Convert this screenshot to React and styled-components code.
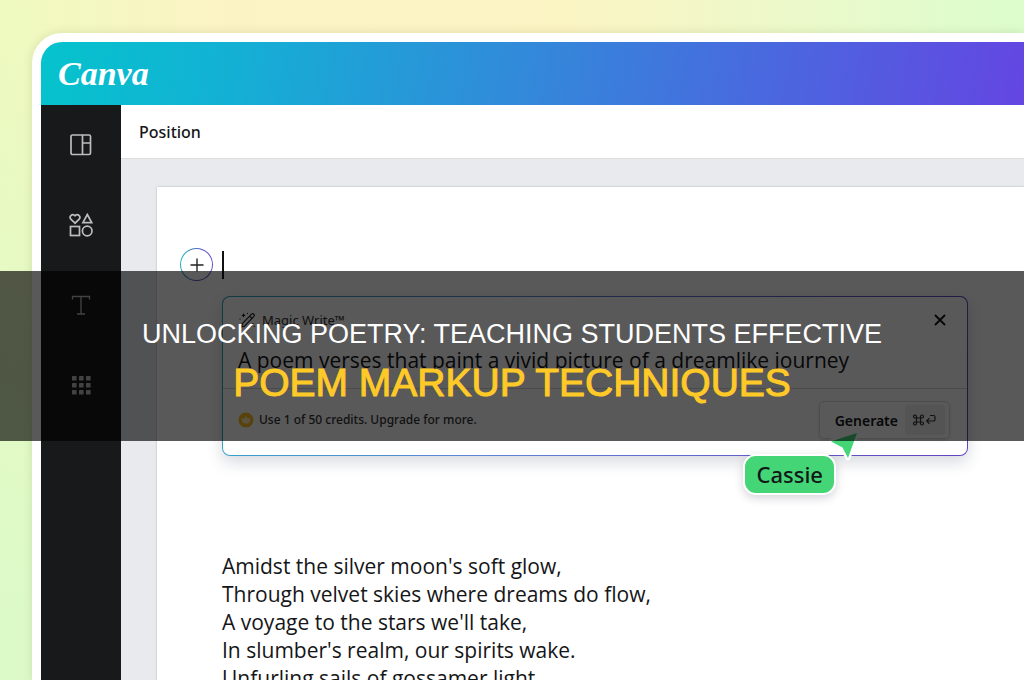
import React from "react";
import styled, { createGlobalStyle } from "styled-components"

const poem = [
    "Amidst the silver moon's soft glow,",
    "Through velvet skies where dreams do flow,",
    "A voyage to the stars we'll take,",
    "In slumber's realm, our spirits wake.",
    "Unfurling sails of gossamer light,",
]

function LayoutIcon() {
    return (
        <Icon viewBox="0 0 24 24">
            <rect x="2" y="2" width="19.500" height="19.500" rx="1.5" />
            <path d="M13.500 2v19.500M13.500 10h8" />
        </Icon>
    )
}

function ElementsIcon() {
    return (
        <Icon viewBox="0 0 24 24">
            <path d="M6 10.2 1.8 6.1C-.3 3.5 3.4-.4 6 2.7c2.6-3.1 6.3.8 4.2 3.4z" />
            <path d="M18.300 1.500 22.700 9.700H13.900z" />
            <rect x="1.500" y="13.500" width="9" height="9" />
            <circle cx="18.200" cy="18" r="4.800" />
        </Icon>
    )
}

function TextIcon() {
    return (
        <Icon viewBox="0 0 24 24" $thin>
            <path d="M3.500 6.500V3.500h17v3M12 3.500v17.500M8 21h8" />
        </Icon>
    )
}

function AppsIcon() {
    const spots = [3, 10, 17]
    return (
        <Icon viewBox="0 0 24 24" $solid>
            {spots.map((y) => spots.map((x) => <rect key={x + "-" + y} x={x} y={y} width="4.600" height="4.600" rx=".6" />))}
        </Icon>
    )
}

function App() {
    return (
        <Screen>
            <GlobalStyle />
            <Editor>
                <Header>
                    <Logo href="#">Canva</Logo>
                </Header>
                <Workspace>
                    <SideBar>
                        <SideButton aria-label="Design"><LayoutIcon /></SideButton>
                        <SideButton aria-label="Elements"><ElementsIcon /></SideButton>
                        <SideButton aria-label="Text"><TextIcon /></SideButton>
                        <SideButton aria-label="Apps"><AppsIcon /></SideButton>
                    </SideBar>
                    <Main>
                        <ToolBar>
                            <ToolButton>Position</ToolButton>
                        </ToolBar>
                        <Canvas>
                            <Paper>
                                <NewLine>
                                    <AddButton aria-label="Add">
                                        <svg width="14" height="14" viewBox="0 0 14 14" fill="none" stroke="#222" strokeWidth="1.4">
                                            <path d="M7 .5v13M.5 7h13" />
                                        </svg>
                                    </AddButton>
                                    <Caret />
                                </NewLine>
                                <MagicCard onSubmit={(e) => e.preventDefault()}>
                                    <CardTop>
                                        <MagicLabel htmlFor="prompt">
                                            <svg width="17" height="17" viewBox="0 0 17 17" fill="none" stroke="#222" strokeWidth="1.2" strokeLinecap="round" strokeLinejoin="round">
                                                <path d="M2.500 15 3.300 11.700 12.600 2.100c1.500-1.500 3.800.8 2.300 2.300L5.600 14.100zM10.600 4.100l2.300 2.300" />
                                                <path d="M4.500 2v2.600M3.200 3.300h2.600M1 7v.1M8.500 1.300v.1M14 11.500v.1M12 14v.1M15.300 14.300v.1" />
                                            </svg>
                                            Magic Write™
                                        </MagicLabel>
                                        <CloseButton type="button" aria-label="Close">
                                            <svg width="12" height="12" viewBox="0 0 12 12" fill="none" stroke="#111" strokeWidth="1.8">
                                                <path d="M1 1l10 10M11 1 1 11" />
                                            </svg>
                                        </CloseButton>
                                    </CardTop>
                                    <Prompt id="prompt" defaultValue="A poem verses that paint a vivid picture of a dreamlike journey" />
                                    <CardBottom>
                                        <Credits>
                                            <svg width="16" height="16" viewBox="0 0 16 16">
                                                <circle cx="8" cy="8" r="7.500" fill="#fdbc22" />
                                                <path d="M3.500 5.500 6 7l2-3 2 3 2.500-1.500-.8 4.500c-1.600 2-5.800 2-7.400 0z" fill="#fff1bd" />
                                            </svg>
                                            Use 1 of 50 credits. Upgrade for more.
                                        </Credits>
                                        <GenerateButton>
                                            Generate
                                            <KeyHint>
                                                <svg width="24" height="12" viewBox="0 0 24 12" fill="none" stroke="#333" strokeWidth="1.2">
                                                    <path d="M3.500 4h4v4h-4zM3.500 4H2.300A1.500 1.500 0 1 1 3.500 2.500zM7.500 4V2.500A1.500 1.500 0 1 1 9 4zM7.500 8H9a1.500 1.500 0 1 1-1.500 1.500zM3.500 8v1.500A1.500 1.500 0 1 1 2 8z" />
                                                    <path d="M17 1.500h3.500a1.500 1.500 0 0 1 1.500 1.500v2.500a1.500 1.500 0 0 1-1.500 1.500H14M16.500 4.200 13.700 7l2.800 2.800" />
                                                </svg>
                                            </KeyHint>
                                        </GenerateButton>
                                    </CardBottom>
                                    <Pointer width="34" height="34" viewBox="0 0 34 34">
                                        <path d="M30 4 4 12.500 15.500 18.500 21 29z" fill="#43d576" stroke="#fff" strokeWidth="5" strokeLinejoin="round" paintOrder="stroke" />
                                    </Pointer>
                                    <NameTag>Cassie</NameTag>
                                </MagicCard>
                                <Poem>
                                    {poem.map((line) => <p key={line}>{line}</p>)}
                                </Poem>
                            </Paper>
                        </Canvas>
                    </Main>
                </Workspace>
            </Editor>
            <TitleBand>
                <h1>UNLOCKING POETRY: TEACHING STUDENTS EFFECTIVE</h1>
                <h2>POEM MARKUP TECHNIQUES</h2>
            </TitleBand>
        </Screen>
    )
}

const GlobalStyle = createGlobalStyle`
    *{
        box-sizing:border-box;
    }
    body{
        margin:0;
        font-family:"Noto Sans", sans-serif;
        color:#151618;
    }
    h1, h2, p{
        margin:0;
        font-weight:400;
    }
    button{
        font-family:inherit;
        color:inherit;
        border:none;
        padding:0;
        background:none;
        cursor:pointer;
    }
    svg{
        display:block;
    }
`
const Screen = styled.div`
    position:relative;
    display:flex;
    height:100vh;
    overflow:hidden;
    padding:33px 0 0 32px;
    background:
        linear-gradient(to bottom, rgba(220,250,200,0), #dcfac8 90%) left / 32px 100% no-repeat,
        linear-gradient(to right, #eefabf, #fcf3c4 22%, #fbf4c3 55%, #e9facb 82%, #dcfdcd);
`
const Editor = styled.div`
    flex:1;
    min-width:0;
    display:flex;
    flex-direction:column;
    border:solid white;
    border-width:9px 0 0 9px;
    border-radius:30px 0 0 0;
    overflow:hidden;
    background-color:white;
    box-shadow:0 0 10px rgba(90,90,40,0.16);
`
const Header = styled.header`
    flex:none;
    height:63px;
    display:flex;
    align-items:center;
    padding-left:17px;
    background:linear-gradient(100deg, #05c3cc, #12b2d4 18%, #3388da 50%, #4c65df 76%, #6446e2);
`
const Logo = styled.a`
    font-family:"Liberation Serif", serif;
    font-size:34px;
    line-height:40px;
    font-weight:700;
    font-style:italic;
    color:white;
    text-decoration:none;
`
const Workspace = styled.div`
    flex:1;
    min-height:0;
    display:flex;
`
const SideBar = styled.nav`
    flex:none;
    width:80px;
    display:flex;
    flex-direction:column;
    background-color:#18191b;
`
const SideButton = styled.button`
    height:80px;
    display:flex;
    align-items:center;
    justify-content:center;
`
const Icon = styled.svg`
    width:24px;
    height:24px;
    fill:${(props) => (props.$solid ? "#bdbdbf" : "none")};
    stroke:${(props) => (props.$solid ? "none" : "#bdbdbf")};
    stroke-width:${(props) => (props.$thin ? "1.3" : "1.7")};
`
const Main = styled.main`
    flex:1;
    min-width:0;
    display:flex;
    flex-direction:column;
`
const ToolBar = styled.div`
    flex:none;
    height:54px;
    display:flex;
    align-items:center;
    padding-left:18px;
    background-color:white;
    border-bottom:1px solid #dcdddd;
`
const ToolButton = styled.button`
    font-size:16px;
    line-height:20px;
    font-weight:500;
`
const Canvas = styled.div`
    flex:1;
    min-height:0;
    overflow:hidden;
    padding:28px 0 0 36px;
    background-color:#e9eaee;
`
const Paper = styled.article`
    min-height:100%;
    padding:61px 56px 40px 23px;
    background-color:white;
    box-shadow:0 0 2px rgba(0,0,0,0.25);
`
const NewLine = styled.div`
    display:flex;
    align-items:center;
    gap:9px;
`
const AddButton = styled.button`
    width:33px;
    height:33px;
    display:flex;
    align-items:center;
    justify-content:center;
    border:1px solid transparent;
    border-radius:50%;
    background:linear-gradient(white, white) padding-box, linear-gradient(100deg, #16bcb6, #5f50c8 60%) border-box;
`
const Caret = styled.span`
    width:2px;
    height:28px;
    background-color:#111;
`
const MagicCard = styled.form`
    position:relative;
    margin:15px 0 0 42px;
    border:1px solid transparent;
    border-radius:8px;
    background:linear-gradient(white, white) padding-box, linear-gradient(110deg, #2fa9c4, #5f83d8 40%, #6442c0) border-box;
    box-shadow:0 6px 16px rgba(50,60,90,0.2);
`
const CardTop = styled.div`
    display:flex;
    align-items:center;
    justify-content:space-between;
    padding:12px 21px 0 16px;
`
const MagicLabel = styled.label`
    display:flex;
    align-items:center;
    gap:6px;
    font-size:13px;
    line-height:22px;
    color:#333;
`
const CloseButton = styled.button`
    width:12px;
    height:12px;
`
const Prompt = styled.input`
    display:block;
    width:100%;
    height:58px;
    padding:0 15px;
    border:none;
    border-bottom:1px solid #d4d5d8;
    outline:none;
    background:none;
    font-family:"Open Sans", sans-serif;
    font-size:21px;
    color:#151618;
`
const CardBottom = styled.div`
    display:flex;
    align-items:center;
    justify-content:space-between;
    padding:12px 17px 16px 15px;
`
const Credits = styled.div`
    display:flex;
    align-items:center;
    gap:5px;
    font-size:12px;
    line-height:18px;
    font-weight:500;
    color:#333;
`
const GenerateButton = styled.button`
    display:flex;
    align-items:center;
    gap:7px;
    height:38px;
    padding:0 4px 0 15px;
    border:1px solid #dcdde0;
    border-radius:5px;
    box-shadow:0 1px 3px rgba(0,0,0,0.12);
    font-size:14px;
    font-weight:600;
`
const KeyHint = styled.span`
    padding:9px 8px;
    border-radius:4px;
    background-color:#f0f0f2;
`
const Pointer = styled.svg`
    position:absolute;
    right:106px;
    bottom:-8px;
`
const NameTag = styled.span`
    position:absolute;
    right:131px;
    top:157px;
    padding:5px 11px;
    border:2px solid white;
    border-radius:13px;
    background-color:#43d576;
    box-shadow:0 3px 10px rgba(40,40,70,0.2);
    font-size:22px;
    line-height:27px;
    font-weight:500;
`
const Poem = styled.div`
    margin:96px 0 0 42px;
    font-family:"Open Sans", sans-serif;
    font-size:21px;
    line-height:28px;
`
const TitleBand = styled.section`
    position:absolute;
    left:0;
    right:0;
    top:271px;
    padding:43px 20px 33px;
    background-color:rgba(0,0,0,0.65);
    font-family:"Liberation Sans", sans-serif;
    text-align:center;
    h1{
        font-size:27px;
        line-height:40px;
        color:white;
    }
    h2{
        margin-top:4px;
        font-size:39px;
        line-height:50px;
        color:#ffca28;
        -webkit-text-stroke:1px #ffca28;
    }
`

export default App
